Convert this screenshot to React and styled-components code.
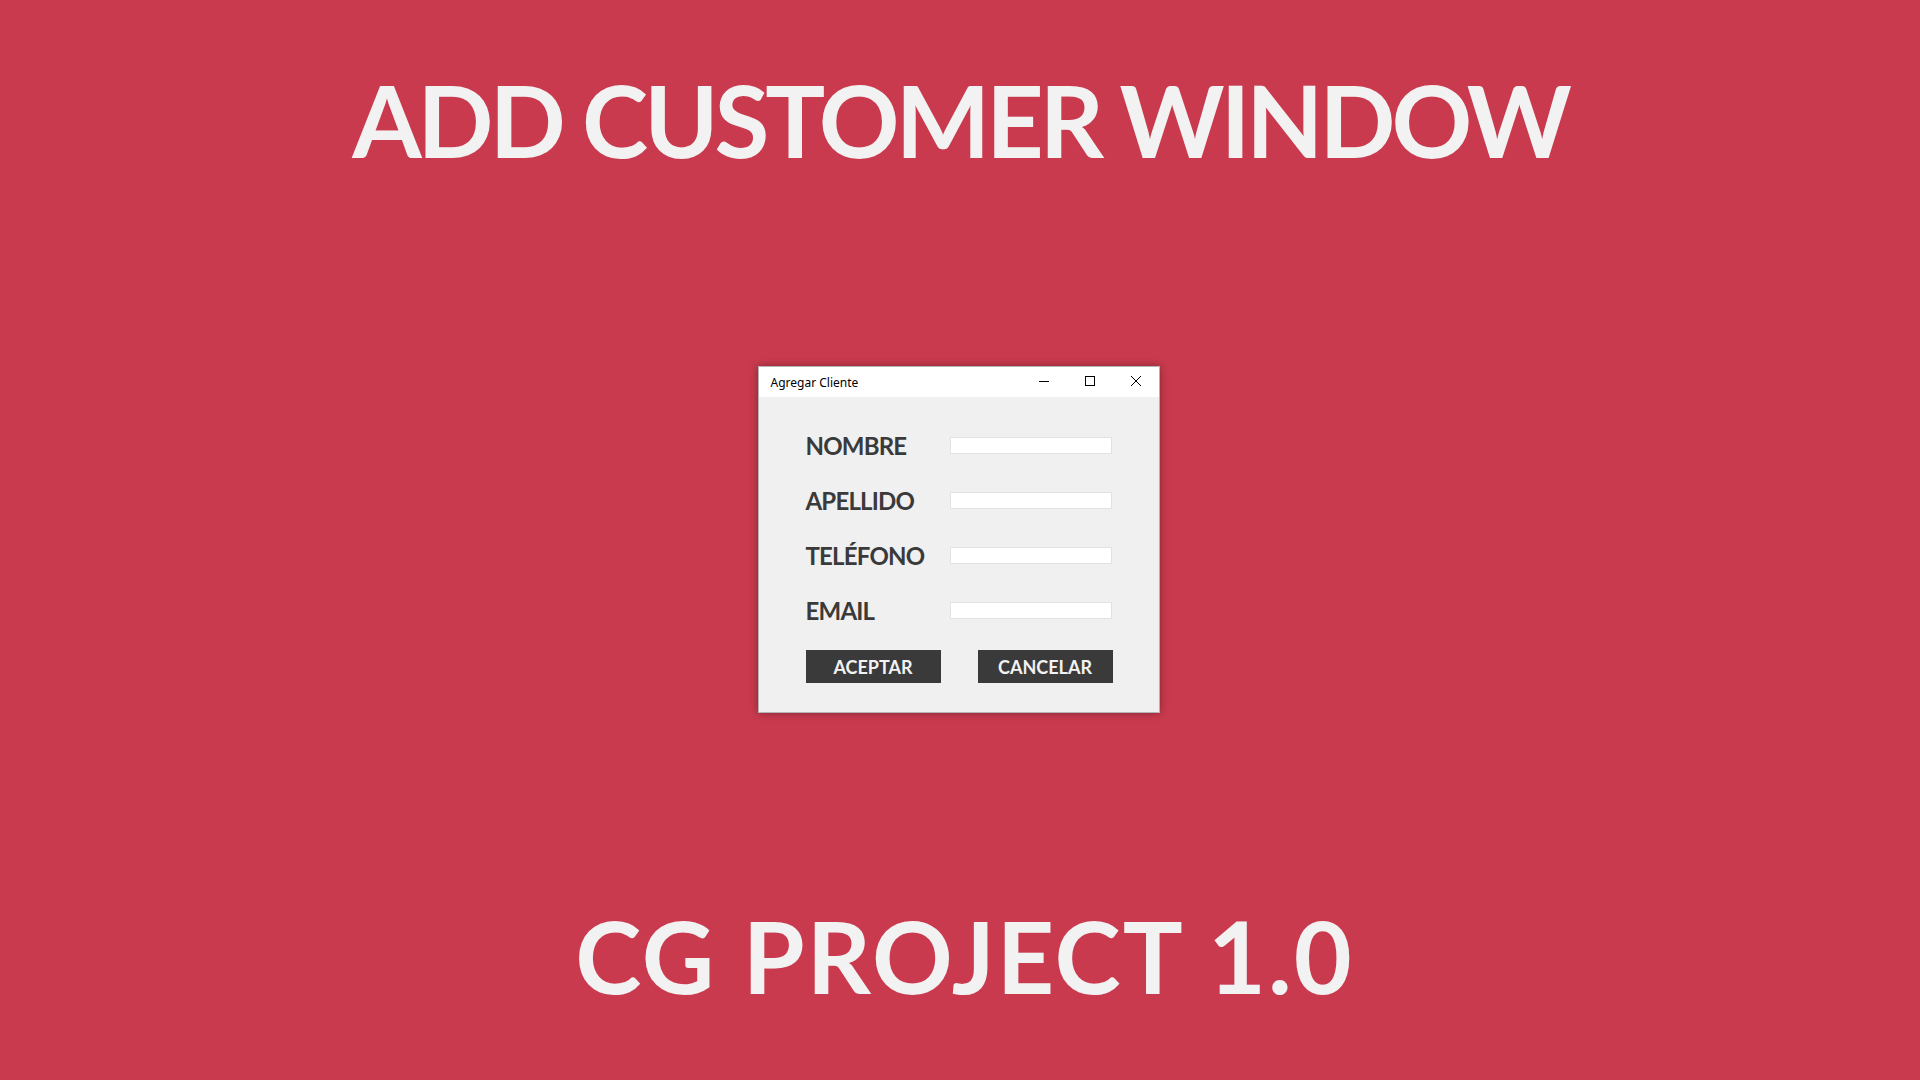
import styled, { createGlobalStyle } from 'styled-components';

const GlobalStyle = createGlobalStyle`
    html, body {
        margin: 0;
        padding: 0;
        background-color: #c93a4e;
    }
    * {
        box-sizing: border-box;
    }
`;

const fields = ['NOMBRE', 'APELLIDO', 'TELÉFONO', 'EMAIL'];

const MinIcon = () => (
    <svg width='10' height='10' viewBox='0 0 10 10'>
        <path d='M0 5.5h10' stroke='#000' strokeWidth='1' />
    </svg>
);

const MaxIcon = () => (
    <svg width='10' height='10' viewBox='0 0 10 10'>
        <rect x='0.5' y='0.5' width='9' height='9' fill='none' stroke='#000' strokeWidth='1' />
    </svg>
);

const CloseIcon = () => (
    <svg width='10' height='10' viewBox='0 0 10 10'>
        <path d='M0 0L10 10M10 0L0 10' stroke='#000' strokeWidth='1' />
    </svg>
);

const App = () => {
    return (
        <>
            <GlobalStyle />
            <Page>
                <Heading $spacing={-4}>ADD CUSTOMER WINDOW</Heading>
                <Center>
                    <Window>
                        <TitleBar>
                            <Caption>Agregar Cliente</Caption>
                            <Controls>
                                <ControlButton>
                                    <MinIcon />
                                </ControlButton>
                                <ControlButton>
                                    <MaxIcon />
                                </ControlButton>
                                <ControlButton>
                                    <CloseIcon />
                                </ControlButton>
                            </Controls>
                        </TitleBar>
                        <Form>
                            {fields.map((f) => (
                                <Row key={f}>
                                    <Label>{f}</Label>
                                    <Input type='text' />
                                </Row>
                            ))}
                            <Actions>
                                <Button type='button'>ACEPTAR</Button>
                                <Button type='button'>CANCELAR</Button>
                            </Actions>
                        </Form>
                    </Window>
                </Center>
                <Heading $spacing={2} $shift={9}>
                    CG PROJECT 1.0
                </Heading>
            </Page>
        </>
    );
};

const Page = styled.main`
    height: 100vh;
    display: grid;
    grid-template-rows: auto 1fr auto;
    justify-items: center;
    padding: 69px 0 75px;
`;

const Heading = styled.h1`
    margin: 0 0 0 ${(p) => p.$shift || 0}px;
    font-family: Lato, 'Open Sans', sans-serif;
    font-weight: 700;
    font-size: 100px;
    line-height: 1;
    color: #f2f2f2;
    letter-spacing: ${(p) => p.$spacing}px;
    white-space: nowrap;
`;

const Center = styled.div`
    display: flex;
    align-items: center;
    justify-content: center;
    padding-top: 5px;
    padding-right: 3px;
`;

const Window = styled.div`
    width: 402px;
    height: 347px;
    display: flex;
    flex-direction: column;
    background-color: #f0f0f0;
    border: 1px solid rgba(0, 0, 0, 0.25);
    box-shadow: 0 0 8px rgba(0, 0, 0, 0.35);
`;

const TitleBar = styled.div`
    height: 30px;
    flex-shrink: 0;
    display: flex;
    align-items: center;
    justify-content: space-between;
    background-color: #ffffff;
`;

const Caption = styled.span`
    padding-left: 12px;
    font-family: 'Noto Sans', 'Open Sans', sans-serif;
    font-size: 12px;
    color: #000;
`;

const Controls = styled.div`
    display: flex;
    height: 100%;
`;

const ControlButton = styled.div`
    width: 46px;
    height: 100%;
    display: flex;
    align-items: center;
    justify-content: center;
    padding-bottom: 2px;
`;

const Form = styled.div`
    flex: 1;
    display: flex;
    flex-direction: column;
    gap: 30px;
    padding: 36px 47px 0 47px;
`;

const Row = styled.div`
    display: flex;
    align-items: center;
    height: 25px;
`;

const Label = styled.span`
    width: 146px;
    font-family: Lato, 'Open Sans', sans-serif;
    font-weight: 700;
    font-size: 24px;
    letter-spacing: -0.8px;
    line-height: 1;
    color: #3a3a3a;
`;

const Input = styled.input`
    width: 162px;
    height: 17px;
    margin: 0;
    padding: 0;
    background-color: #ffffff;
    border: 1px solid #e2e2e2;
    outline: none;
`;

const Actions = styled.div`
    display: flex;
    justify-content: space-between;
    margin-top: -3px;
    width: 307px;
`;

const Button = styled.button`
    width: 135px;
    height: 33px;
    border: none;
    background-color: #3a3a3a;
    color: #f2f2f2;
    font-family: Lato, 'Open Sans', sans-serif;
    font-weight: 700;
    font-size: 18px;
    padding: 0;
    cursor: pointer;
`;

export default App;
